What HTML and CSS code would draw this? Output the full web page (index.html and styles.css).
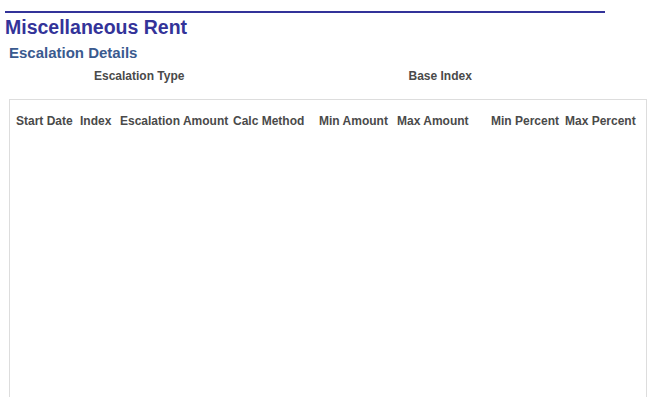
FILE: index.html
```html
<!DOCTYPE html>
<html lang="en">
<head>
<title>Miscellaneous Rent</title>
<meta charset="UTF-8">
<link rel="stylesheet" href="styles.css">
</head>
<body>

<div class="page">
  <h1 class="page-title">Miscellaneous Rent</h1>
  <h2 class="section-title">Escalation Details</h2>

  <div class="field-row">
    <span class="field-label type-label">Escalation Type</span>
    <span class="field-label index-label">Base Index</span>
  </div>

  <div class="grid-box">
    <div class="grid-head">
      <span>Start Date</span>
      <span>Index</span>
      <span>Escalation Amount</span>
      <span>Calc Method</span>
      <span>Min Amount</span>
      <span>Max Amount</span>
      <span>Min Percent</span>
      <span>Max Percent</span>
    </div>
  </div>
</div>

</body>
</html>
```

FILE: styles.css
```css
body {
  margin: 0;
  font-family: "Liberation Sans", Arial, sans-serif;
  background: #fff;
  overflow: hidden;
}

.page {
  padding: 11px 0 0 5px;
}

.page-title {
  width: 600px;
  margin: 0;
  padding-top: 3px;
  border-top: 2px solid #333399;
  font-size: 19.5px;
  line-height: 22px;
  color: #333399;
}

.section-title {
  margin: 6px 0 0 4px;
  font-size: 15px;
  line-height: 17px;
  color: #3a5a8f;
}

.field-row {
  display: flex;
  margin-top: 8px;
  font-size: 12px;
  line-height: 15px;
  font-weight: bold;
  color: #4a4a4a;
}

.type-label {
  margin-left: 89px;
}

.index-label {
  margin-left: 224px;
}

.grid-box {
  margin: 15px 0 0 4px;
  width: 636px;
  height: 298px;
  border: 1px solid #dddddd;
  border-bottom: none;
}

.grid-head {
  display: grid;
  grid-template-columns: 64px 40px 113px 86px 78px 94px 74px auto;
  padding: 14px 0 0 6px;
  font-size: 12px;
  line-height: 15px;
  font-weight: bold;
  color: #4a4a4a;
  white-space: nowrap;
}
```
